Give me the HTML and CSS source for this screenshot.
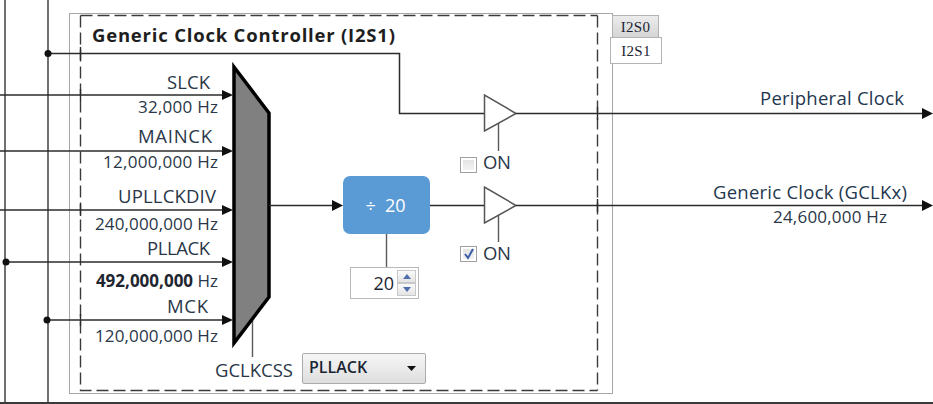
FILE: index.html
```html
<!DOCTYPE html>
<html>
<head>
<meta charset="utf-8">
<link rel="stylesheet" href="styles.css">
</head>
<body>
<div class="canvas">
  <svg class="wires" width="933" height="404" viewBox="0 0 933 404">
    <!-- left bus lines -->
    <line class="bus" x1="5" y1="0" x2="5" y2="402"/>
    <line class="bus" x1="48" y1="0" x2="48" y2="402"/>
    <!-- outer box -->
    <rect class="outer" x="69.5" y="13.5" width="543" height="380"/>
    <!-- dashed box -->
    <path class="dashed" d="M80.5 15.5 H597.5"/>
    <path class="dashed" d="M80.5 15.5 V390.5 H597.5"/>
    <path class="dashed" d="M597.5 15.5 V390.5"/>

    <!-- peripheral clock path -->
    <polyline class="wire" points="48,53.5 399.5,53.5 399.5,113.5 484,113.5"/>
    <circle class="dot" cx="48" cy="53.5" r="3.5"/>

    <!-- inputs -->
    <line class="wire" x1="0" y1="95" x2="224" y2="95"/>
    <polygon class="arrow" points="222,90 233,95 222,100"/>
    <line class="wire" x1="0" y1="151" x2="224" y2="151"/>
    <polygon class="arrow" points="222,146 233,151 222,156"/>
    <line class="wire" x1="0" y1="210" x2="224" y2="210"/>
    <polygon class="arrow" points="222,205 233,210 222,215"/>
    <line class="wire" x1="6" y1="262" x2="224" y2="262"/>
    <polygon class="arrow" points="222,257 233,262 222,267"/>
    <circle class="dot" cx="6" cy="262" r="3.5"/>
    <line class="wire" x1="47" y1="320" x2="224" y2="320"/>
    <polygon class="arrow" points="222,315 233,320 222,325"/>
    <circle class="dot" cx="47" cy="320" r="3.5"/>

    <!-- crossing ticks on dashed line -->
    <line class="tick" x1="80.5" y1="47" x2="80.5" y2="60"/>
    <line class="tick" x1="80.5" y1="89" x2="80.5" y2="101"/>
    <line class="tick" x1="80.5" y1="204" x2="80.5" y2="216"/>
    <line class="tick" x1="80.5" y1="314" x2="80.5" y2="326"/>
    <line class="tick" x1="597.5" y1="107" x2="597.5" y2="120"/>
    <line class="tick" x1="597.5" y1="199" x2="597.5" y2="212"/>

    <!-- selector line -->
    <line class="sel" x1="252.5" y1="318" x2="252.5" y2="357"/>
    <!-- mux -->
    <polygon class="mux" points="234,67 269,113 269,297 234,343"/>

    <!-- mux output -->
    <line class="wire" x1="269" y1="205.5" x2="334" y2="205.5"/>
    <polygon class="arrow" points="332,200 343,205.5 332,211"/>

    <!-- divider to spinner -->
    <line class="sel" x1="386.5" y1="234" x2="386.5" y2="267"/>
    <!-- divider to buffer -->
    <line class="wire" x1="430" y1="205.5" x2="484" y2="205.5"/>

    <!-- buffer control lines -->
    <line class="sel" x1="498.5" y1="122" x2="498.5" y2="151"/>
    <line class="sel" x1="498.5" y1="214" x2="498.5" y2="242"/>

    <!-- buffers -->
    <polygon class="buf" points="484.5,95 484.5,131 516,113.5"/>
    <polygon class="buf" points="484.5,187 484.5,223 516,205.5"/>

    <!-- outputs -->
    <line class="wire" x1="516" y1="113.5" x2="924" y2="113.5"/>
    <polygon class="arrow" points="922,108 933,113.5 922,119"/>
    <line class="wire" x1="516" y1="205.5" x2="924" y2="205.5"/>
    <polygon class="arrow" points="922,200 933,205.5 922,211"/>

    <!-- bottom rule -->
    <line class="rule" x1="0" y1="403" x2="933" y2="403"/>

    <!-- texts -->
    <text class="title" x="92" y="42" textLength="303">Generic Clock Controller (I2S1)</text>

    <text class="lbl word end" x="210" y="89" textLength="43">SLCK</text>
    <text class="lbl num end" x="218" y="113" textLength="80">32,000 Hz</text>
    <text class="lbl word end" x="212" y="143" textLength="74">MAINCK</text>
    <text class="lbl num end" x="218" y="168" textLength="115">12,000,000 Hz</text>
    <text class="lbl word end" x="216" y="203" textLength="98">UPLLCKDIV</text>
    <text class="lbl num end" x="218" y="230" textLength="123">240,000,000 Hz</text>
    <text class="lbl word end" x="210" y="255" textLength="63">PLLACK</text>
    <text class="lbl num end" x="218" y="287"><tspan class="strong">492,000,000</tspan> Hz</text>
    <text class="lbl word end" x="208" y="313" textLength="41">MCK</text>
    <text class="lbl num end" x="218" y="342" textLength="123">120,000,000 Hz</text>

    <text class="lbl word" x="215" y="377" textLength="78">GCLKCSS</text>

    <text class="lbl word" x="483" y="169" textLength="28">ON</text>
    <text class="lbl word" x="483" y="260" textLength="28">ON</text>

    <text class="lbl word out" x="904" y="105" textLength="144">Peripheral Clock</text>
    <text class="lbl word out" x="907" y="199" textLength="194">Generic Clock (GCLKx)</text>
    <text class="lbl num end" x="887" y="223" textLength="114">24,600,000 Hz</text>
  </svg>

  <div class="tab tab-inactive">I2S0</div>
  <div class="tab tab-active">I2S1</div>

  <div class="divider">÷&nbsp; 20</div>

  <div class="check off"></div>
  <div class="check on">
    <svg width="12" height="12" viewBox="0 0 12 12"><path d="M2 6 L5 10 L10 1" fill="none" stroke="#3a5da8" stroke-width="2"/></svg>
  </div>

  <div class="spinner">
    <span class="spin-val">20</span>
    <div class="spin-btns">
      <div class="spin-btn"><svg width="8" height="5" viewBox="0 0 8 5"><polygon points="0,5 4,0 8,5" fill="#4d6fae"/></svg></div>
      <div class="spin-btn"><svg width="8" height="5" viewBox="0 0 8 5"><polygon points="0,0 8,0 4,5" fill="#4d6fae"/></svg></div>
    </div>
  </div>

  <div class="combo">
    <span class="combo-text">PLLACK</span>
    <svg class="combo-arrow" width="9" height="5" viewBox="0 0 9 5"><polygon points="0,0 9,0 4.5,5" fill="#111"/></svg>
  </div>
</div>
</body>
</html>
```

FILE: styles.css
```css
html, body {
  margin: 0;
  padding: 0;
  background: #ffffff;
}

.canvas {
  position: relative;
  width: 933px;
  height: 404px;
  overflow: hidden;
  background: #ffffff;
  font-family: "Open Sans", "Noto Sans", sans-serif;
}

.wires {
  position: absolute;
  left: 0;
  top: 0;
}

.bus {
  stroke: #4d4d4d;
  stroke-width: 1.6;
}

.outer {
  fill: none;
  stroke: #a6a6a6;
  stroke-width: 1;
}

.dashed {
  fill: none;
  stroke: #3a3a3a;
  stroke-width: 1.4;
  stroke-dasharray: 12 5;
}

.wire {
  fill: none;
  stroke: #2b2b2b;
  stroke-width: 1.5;
}

.tick {
  stroke: #2b2b2b;
  stroke-width: 1.4;
}

.sel {
  stroke: #5a5a5a;
  stroke-width: 1.4;
}

.dot {
  fill: #111111;
}

.arrow {
  fill: #111111;
}

.mux {
  fill: #808080;
  stroke: #000000;
  stroke-width: 3.5;
  stroke-linejoin: miter;
}

.buf {
  fill: #ffffff;
  stroke: #555555;
  stroke-width: 1.5;
}

.rule {
  stroke: #3a3a3a;
  stroke-width: 2;
}

.title {
  font-family: "Open Sans", "Noto Sans", sans-serif;
  font-weight: 700;
  font-size: 18.5px;
  fill: #1e1e1e;
}

.lbl {
  font-family: "Open Sans", "Noto Sans", sans-serif;
  fill: #2a3748;
}

.lbl.word {
  font-size: 18.5px;
}

.lbl.num {
  font-size: 17px;
}

.lbl.end {
  text-anchor: end;
}

.lbl.out {
  text-anchor: end;
  fill: #23374f;
}

.strong {
  font-weight: 700;
  fill: #1f2630;
}

.tab {
  position: absolute;
  box-sizing: border-box;
  font-family: "Liberation Serif", "Times New Roman", serif;
  font-size: 15px;
  color: #1c2533;
  display: flex;
  align-items: center;
  justify-content: center;
  letter-spacing: 0.3px;
}

.tab-inactive {
  left: 612px;
  top: 15px;
  width: 47px;
  height: 23px;
  background: linear-gradient(#ececec, #d4d4d4);
  border: 1px solid #b3b3b3;
  border-bottom: none;
  padding-top: 1px;
}

.tab-active {
  left: 610px;
  top: 37px;
  width: 52px;
  height: 27px;
  background: #ffffff;
  border: 1px solid #b3b3b3;
  padding-top: 1px;
}

.divider {
  position: absolute;
  left: 343px;
  top: 176px;
  width: 87px;
  height: 58px;
  box-sizing: border-box;
  background: #5b9bd5;
  border-radius: 7px;
  color: #ffffff;
  font-size: 18px;
  display: flex;
  align-items: center;
  justify-content: center;
  padding-right: 2px;
}

.check {
  position: absolute;
  left: 460px;
  width: 17px;
  height: 16px;
  box-sizing: border-box;
  border: 1px solid #a0a0a0;
  background: linear-gradient(#e0e0e0, #f6f6f6);
  box-shadow: inset 0 0 0 2px #ffffff;
  display: flex;
  align-items: center;
  justify-content: center;
}

.check.off {
  top: 157px;
}

.check.on {
  top: 246px;
}

.spinner {
  position: absolute;
  left: 350px;
  top: 267px;
  width: 69px;
  height: 32px;
  box-sizing: border-box;
  border: 1px solid #b9b9b9;
  background: #ffffff;
  display: flex;
  align-items: center;
  padding: 2px 2px 2px 4px;
  gap: 3px;
}

.spin-val {
  flex: 1;
  text-align: right;
  font-size: 18px;
  color: #1e2530;
  line-height: 1;
}

.spin-btns {
  width: 19px;
  height: 26px;
  display: flex;
  flex-direction: column;
}

.spin-btn {
  flex: 1;
  box-sizing: border-box;
  border: 1px solid #c8c8c8;
  background: linear-gradient(#fafafa, #e4e4e4);
  display: flex;
  align-items: center;
  justify-content: center;
}

.combo {
  position: absolute;
  left: 302px;
  top: 353px;
  width: 124px;
  height: 31px;
  box-sizing: border-box;
  border: 1px solid #ababab;
  border-radius: 2px;
  background: linear-gradient(#f6f6f6, #dedede);
  display: flex;
  align-items: center;
  justify-content: space-between;
  padding: 0 9px 0 6px;
}

.combo-text {
  font-size: 16px;
  font-weight: 600;
  color: #1c2533;
  margin-top: -4px;
}

.combo-arrow {
  display: block;
}
```
